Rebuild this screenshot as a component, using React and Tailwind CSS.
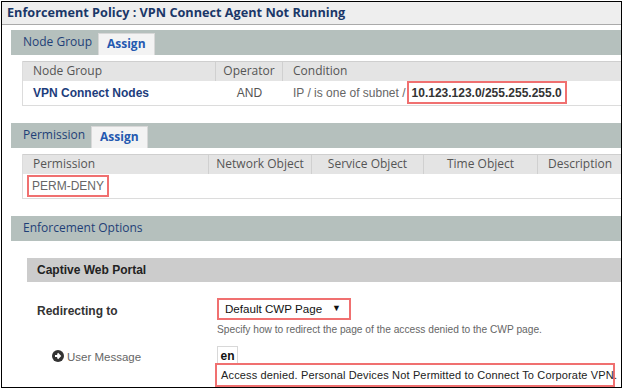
import React from "react";

const tahoma = { fontFamily: '"Open Sans", "DejaVu Sans", sans-serif' };
const arial = { fontFamily: '"Liberation Sans", Arial, sans-serif' };

const SectionBar = ({ title, assign }) => (
  <div className="flex items-end h-[25px] bg-[#b5c0bd] pl-[12px]">
    <span className="text-[12px] text-[#1f3f77] self-center" style={tahoma}>
      {title}
    </span>
    {assign && (
      <span
        className="ml-[6px] h-[22px] px-[8px] flex items-center bg-[#f3f3f3] border border-b-0 border-[#d8d8d8] text-[12px] font-bold text-[#2459b0]"
        style={tahoma}
      >
        Assign
      </span>
    )}
  </div>
);

const HeadCell = ({ children, className = "" }) => (
  <div
    className={`h-full flex items-center text-[12px] text-[#555] border-r border-[#d0d0d0] ${className}`}
    style={tahoma}
  >
    {children}
  </div>
);

export default function App() {
  return (
    <div className="w-[627px] h-[390px] bg-white pt-[1px] pl-[1px]" style={arial}>
      <div className="w-[621px] h-[387px] border border-black overflow-hidden flex flex-col">
        {/* Title */}
        <div className="h-[27px] bg-[#eeeeee] border-b border-[#aaaaaa] flex items-center pl-[5px]">
          <span className="text-[12.7px] font-bold text-[#1a3768]" style={tahoma}>
            Enforcement Policy : VPN Connect Agent Not Running
          </span>
        </div>

        <div className="pl-[9px] flex flex-col">
          {/* Node Group */}
          <div className="mt-[5px]">
            <SectionBar title="Node Group" assign />
          </div>
          <div className="ml-[11px] mt-[6px] border-l border-b border-[#dcdcdc]">
            <div className="flex h-[20px] bg-[#e4e4e4] border-t border-[#cfcfcf]">
              <HeadCell className="w-[193px] pl-[10px]">Node Group</HeadCell>
              <HeadCell className="w-[67px] justify-center">Operator</HeadCell>
              <HeadCell className="flex-1 pl-[10px] border-r-0">Condition</HeadCell>
            </div>
            <div className="flex h-[24px] items-center text-[12px]">
              <div className="w-[193px] pl-[10px] font-bold text-[#1d3d7c]">VPN Connect Nodes</div>
              <div className="w-[67px] text-center text-[#555]">AND</div>
              <div className="flex-1 pl-[10px] text-[#666] flex items-center whitespace-nowrap">
                IP / is one of subnet /
                <span className="ml-[1px] h-[23px] px-[3px] flex items-center border-2 border-[#f07070] font-bold text-[#333]">
                  10.123.123.0/255.255.255.0
                </span>
              </div>
            </div>
          </div>

          {/* Permission */}
          <div className="mt-[17px]">
            <SectionBar title="Permission" assign />
          </div>
          <div className="ml-[11px] mt-[6px] border-l border-b border-[#dcdcdc]">
            <div className="flex h-[20px] bg-[#e4e4e4] border-t border-[#cfcfcf]">
              <HeadCell className="w-[186px] pl-[10px]">Permission</HeadCell>
              <HeadCell className="w-[103px] justify-center">Network Object</HeadCell>
              <HeadCell className="w-[112px] justify-center">Service Object</HeadCell>
              <HeadCell className="w-[114px] justify-center">Time Object</HeadCell>
              <HeadCell className="flex-1 pl-[10px] border-r-0">Description</HeadCell>
            </div>
            <div className="flex h-[24px] items-center text-[12px] pl-[4px]">
              <span className="h-[22px] px-[3px] flex items-center border-2 border-[#f07070] text-[#666]">
                PERM-DENY
              </span>
            </div>
          </div>

          {/* Enforcement options */}
          <div className="mt-[17px]">
            <SectionBar title="Enforcement Options" />
          </div>
          <div className="ml-[16px] mt-[17px] h-[24px] bg-[#cccccc] flex items-center pl-[10px]">
            <span className="text-[12px] font-bold text-[#222]">Captive Web Portal</span>
          </div>

          <div className="mt-[16px] flex">
            <div className="w-[206px] pl-[26px] pt-[4px] text-[12px] font-bold text-[#333]">
              Redirecting to
            </div>
            <div className="flex flex-col">
              <div className="w-[134px] h-[22px] border-2 border-[#f07070] flex items-center justify-between pl-[6px] pr-[8px] text-[11.6px] text-[#111]">
                <span>Default CWP Page</span>
                <span className="text-[9px]">▼</span>
              </div>
              <div className="mt-[2px] text-[10.2px] text-[#666] whitespace-nowrap">
                Specify how to redirect the page of the access denied to the CWP page.
              </div>
            </div>
          </div>

          <div className="mt-[9px] flex">
            <div className="w-[204px] pl-[41px] pt-[3px] flex items-start gap-[3px] text-[11.5px] text-[#666]">
              <svg width="12" height="12" viewBox="0 0 12 12" className="mt-[1px]">
                <circle cx="6" cy="6" r="6" fill="#333" />
                <path d="M3 6h4.5M5.5 3.5L8 6l-2.5 2.5" stroke="#fff" strokeWidth="1.8" fill="none" />
              </svg>
              <span>User Message</span>
            </div>
            <div className="flex flex-col">
              <div className="ml-[2px] w-[21px] h-[19px] border border-b-0 border-[#d8d8d8] flex items-center justify-center text-[12px] font-bold text-[#111]">
                en
              </div>
              <div className="w-[400px] h-[24px] -mt-[2px] border-2 border-[#f07070] bg-white flex items-center pl-[4px] text-[11px] tracking-[0.15px] text-[#222] whitespace-nowrap">
                Access denied. Personal Devices Not Permitted to Connect To Corporate VPN.
              </div>
            </div>
          </div>
        </div>
      </div>
    </div>
  );
}
